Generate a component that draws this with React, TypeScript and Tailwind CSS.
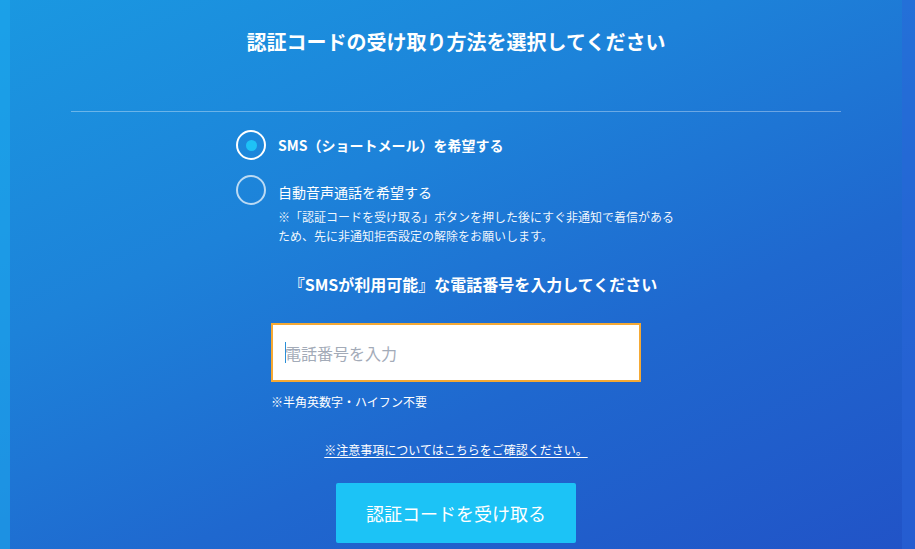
export default function App() {
  return (
    <div className="flex min-h-[549px] w-full font-['Noto_Sans_CJK_JP','Noto_Sans',sans-serif] text-white bg-[linear-gradient(155deg,#1a98e1_0%,#1d82d9_35%,#1f68cf_65%,#2153c7_100%)]">
      <div className="w-[10px] shrink-0 bg-[#1ca6ec]/60" />
      <main className="flex flex-1 flex-col items-center">
        <h1 className="pt-[28px] text-[20px] font-bold leading-[28px]">
          認証コードの受け取り方法を選択してください
        </h1>
        <div className="mt-[55px] h-px w-[770px] bg-white/35" />

        <div className="mt-[18px] flex w-[440px] flex-col">
          <label className="flex items-center gap-3">
            <span className="flex size-[30px] shrink-0 items-center justify-center rounded-full border-2 border-white">
              <span className="size-[11px] rounded-full bg-[#1ec2f6]" />
            </span>
            <span className="text-[14px] font-bold leading-[20px]">SMS（ショートメール）を希望する</span>
          </label>

          <label className="mt-[15px] flex items-start gap-3">
            <span className="size-[30px] shrink-0 rounded-full border-2 border-white/70" />
            <span className="flex w-[400px] flex-col">
              <span className="mt-[7px] text-[14px] leading-[20px]">自動音声通話を希望する</span>
              <span className="mt-[5px] text-[12px] leading-[19px] text-white/95">
                ※「認証コードを受け取る」ボタンを押した後にすぐ非通知で着信があるため、先に非通知拒否設定の解除をお願いします。
              </span>
            </span>
          </label>
        </div>

        <h2 className="mt-[27px] pl-[34px] text-[16px] font-bold leading-[24px]">
          『SMSが利用可能』な電話番号を入力してください
        </h2>

        <div className="mt-[27px] w-[370px]">
          <div className="relative">
            <input
              type="tel"
              placeholder="電話番号を入力"
              className="h-[59px] w-full border-2 border-[#f5a934] bg-white px-[12px] text-[16px] text-gray-800 outline-none placeholder:text-[#a3abb8]"
            />
            <span className="absolute left-[14px] top-[19px] h-[21px] w-px bg-[#2a8fd8]" />
          </div>
          <p className="mt-[11px] text-[12px] leading-[18px]">※半角英数字・ハイフン不要</p>
        </div>

        <a href="#" className="mt-[30px] text-[12px] leading-[18px] underline underline-offset-2">
          ※注意事項についてはこちらをご確認ください。
        </a>

        <button
          type="button"
          className="mt-[24px] h-[60px] w-[240px] rounded-[2px] bg-[#1cc3f6] text-[18px] text-white"
        >
          認証コードを受け取る
        </button>
      </main>
      <div className="w-[13px] shrink-0 bg-[#2a66da]/50" />
    </div>
  )
}
